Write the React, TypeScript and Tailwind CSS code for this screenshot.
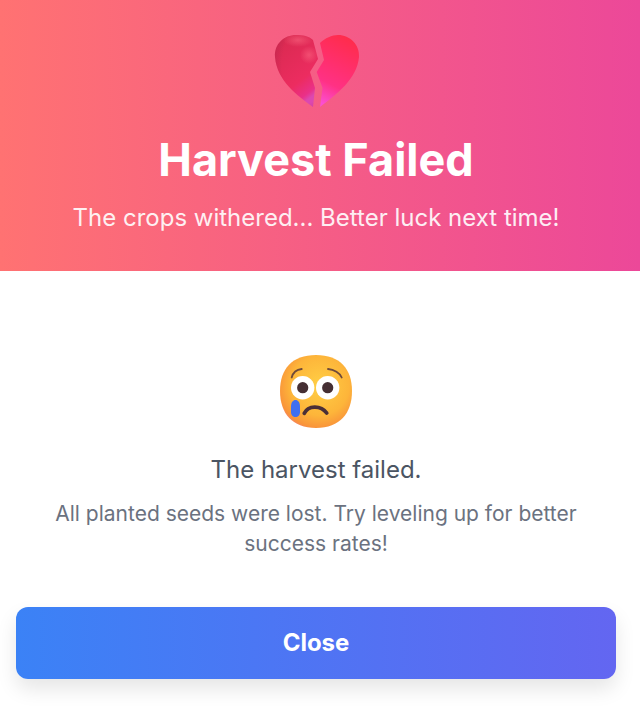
import React from 'react';

const BrokenHeart = () => (
  <svg width="84" height="73" viewBox="0 0 84 73" className="block overflow-visible ml-[2px]">
    <defs>
      <linearGradient id="heartLeft" x1="0.1" y1="0.05" x2="0.55" y2="1">
        <stop offset="0" stopColor="#d92a50" />
        <stop offset="0.7" stopColor="#ec2c60" />
        <stop offset="0.92" stopColor="#ea3088" />
        <stop offset="1" stopColor="#dc48b0" />
      </linearGradient>
      <linearGradient id="heartRight" x1="0.6" y1="0" x2="0.3" y2="1">
        <stop offset="0" stopColor="#ff2c4c" />
        <stop offset="0.7" stopColor="#ff3184" />
        <stop offset="1" stopColor="#fb4fd2" />
      </linearGradient>
      <radialGradient id="heartShine" cx="0.5" cy="0.5" r="0.5">
        <stop offset="0" stopColor="#ff6f88" stopOpacity="0.5" />
        <stop offset="1" stopColor="#ff6f88" stopOpacity="0" />
      </radialGradient>
      <radialGradient id="heartEdge" cx="0.7" cy="0.42" r="0.72">
        <stop offset="0.7" stopColor="#a8244c" stopOpacity="0" />
        <stop offset="1" stopColor="#a8244c" stopOpacity="0.4" />
      </radialGradient>
      <clipPath id="heartLeftClip">
        <path d="M38 5 L43 24 L35 37 L40 53 L38 72 C22 60 2 46 0 22 C-1 9 9 0 21 0 C28 0 34 1 38 5 Z" />
      </clipPath>
    </defs>
    <path d="M38 5 L43 24 L35 37 L40 53 L38 72 C22 60 2 46 0 22 C-1 9 9 0 21 0 C28 0 34 1 38 5 Z" fill="url(#heartLeft)" />
    <g clipPath="url(#heartLeftClip)">
      <rect x="-2" y="-2" width="46" height="76" fill="url(#heartEdge)" />
      <ellipse cx="23" cy="5" rx="15" ry="7" fill="url(#heartShine)" />
      <ellipse cx="34" cy="20" rx="9" ry="9" fill="url(#heartShine)" />
    </g>
    <path d="M45 8 C50 3 57 0 63 0 C75 0 85 10 84 22 C82 44 62 59 45 72 L47.5 53 L41.7 37 L49 25 Z" fill="url(#heartRight)" />
  </svg>
);

const CryingFace = () => (
  <svg width="72" height="73" viewBox="0 0 72 73" className="block">
    <defs>
      <radialGradient id="faceFill" cx="0.55" cy="0.42" r="0.68">
        <stop offset="0" stopColor="#ffcf45" />
        <stop offset="0.6" stopColor="#fdb53a" />
        <stop offset="0.85" stopColor="#f9943a" />
        <stop offset="1" stopColor="#f26b9c" />
      </radialGradient>
    </defs>
    <path d="M36 0 C60 0 72 14 72 36 C72 58 60 73 36 73 C12 73 0 58 0 36 C0 14 12 0 36 0 Z" fill="url(#faceFill)" />
    <path d="M11.7 22.5 C13 17.5 17 14.5 21.7 14" fill="none" stroke="#6f4a3a" strokeWidth="1.8" strokeLinecap="round" />
    <path d="M48 14 C54 14.5 60 18 61.7 22.5" fill="none" stroke="#6f4a3a" strokeWidth="1.8" strokeLinecap="round" />
    <circle cx="22.7" cy="32.7" r="11.7" fill="#fff" />
    <circle cx="47.7" cy="32.7" r="11.7" fill="#fff" />
    <circle cx="22.7" cy="32.7" r="5.6" fill="#452f33" />
    <circle cx="47.7" cy="32.7" r="5.6" fill="#452f33" />
    <path d="M24.3 58.3 C28 50 41 50 46.7 58" fill="none" stroke="#4a2f37" strokeWidth="3.8" strokeLinecap="round" />
    <path d="M11 52 C11 47 13 45 15.5 45 C18 45 20 47 20 52 L20 57 C20 60 18 62 15.5 62 C13 62 11 60 11 57 Z" fill="#3f6ff0" />
  </svg>
);

export default function App() {
  return (
    <div className="w-[640px] h-[709px] bg-white overflow-hidden font-['Inter',sans-serif]">
      <header className="h-[271px] flex flex-col items-center pt-[35px] pr-2 bg-[linear-gradient(90deg,#ff7272,#ec4899)] text-white">
        <BrokenHeart />
        <h1 className="mt-[25px] text-[45px] leading-[54px] font-bold">Harvest Failed</h1>
        <p className="mt-[16px] text-[24px] leading-[29px] opacity-90">The crops withered... Better luck next time!</p>
      </header>
      <main className="flex flex-col items-center w-[632px] px-4 pt-[84px]">
        <CryingFace />
        <p className="mt-[27px] text-[24px] leading-[29px] text-[#4b5563]">The harvest failed.</p>
        <p className="mt-[15px] w-[560px] text-center text-[21px] leading-[30px] text-[#6b7280]">
          All planted seeds were lost. Try leveling up for better success rates!
        </p>
        <button className="mt-[48px] w-[600px] h-[72px] rounded-[12px] bg-[linear-gradient(90deg,#3b82f6,#6366f1)] text-white text-[24px] font-bold shadow-[0_10px_20px_rgba(0,0,0,0.1)]">
          Close
        </button>
      </main>
    </div>
  );
}
